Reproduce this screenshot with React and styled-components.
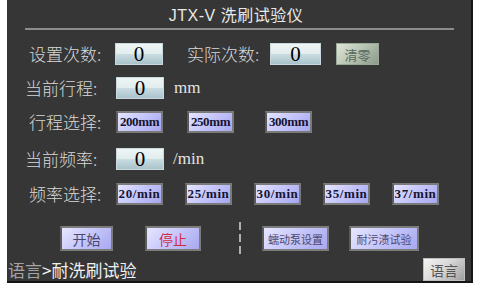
import styled, { createGlobalStyle } from "styled-components";

const Global = createGlobalStyle`
    body {
        margin: 0;
        background: #ffffff;
        font-family: "Noto Sans CJK SC", "Liberation Sans", sans-serif;
    }
`;

const Screen = styled.div`
    margin-left: 7px;
    width: 464px;
    height: 281px;
    background-color: #363636;
    border-right: 2px solid #151515;
    border-bottom: 2px solid #151515;
    display: flex;
    flex-direction: column;
    overflow: hidden;
`;

const Title = styled.div`
    height: 28px;
    display: flex;
    align-items: center;
    justify-content: center;
    padding-right: 6px;
    color: #e8e8e8;
    font-size: 16px;
    font-family: "Liberation Sans", "Noto Sans CJK SC", sans-serif;
    letter-spacing: 0.5px;
`;

const Rule = styled.div`
    height: 2px;
    margin: 0 17px 0 18px;
    background-color: #8c8c8c;
`;

const Row = styled.div`
    display: flex;
    align-items: center;
    height: ${p => p.$h || 22}px;
    margin-top: ${p => p.$mt}px;
    padding-left: ${p => p.$pl || 0}px;
    gap: ${p => p.$gap || 0}px;
`;

const Label = styled.div`
    width: ${p => p.$w}px;
    flex-shrink: 0;
    margin-left: ${p => p.$ml || 0}px;
    color: #d8d8d8;
    font-size: 17px;
    line-height: 22px;
    font-weight: 300;
    white-space: nowrap;
`;

const ValueBox = styled.div`
    width: ${p => p.$w || 48}px;
    height: 22px;
    flex-shrink: 0;
    box-sizing: border-box;
    border: 1px solid #c8d8dc;
    background: linear-gradient(180deg, #eef5f5 0%, #e2eded 48%, #c9dce1 52%, #a9c3cb 100%);
    display: flex;
    align-items: center;
    justify-content: center;
    color: #000;
    font-family: "Liberation Serif", serif;
    font-size: 21px;
    line-height: 1;
`;

const Unit = styled.div`
    margin-left: ${p => p.$ml}px;
    color: #e4e4e4;
    font-family: "Liberation Serif", serif;
    font-size: 17px;
`;

const ClearButton = styled.div`
    margin-left: 15px;
    width: 43px;
    height: 22px;
    box-sizing: border-box;
    border: 1px solid #9aa898;
    background: linear-gradient(135deg, #dfe6d8 0%, #b6c2b2 50%, #8e9c8c 100%);
    display: flex;
    align-items: center;
    justify-content: center;
    color: #56685a;
    font-size: 13px;
`;

const Choice = styled.div`
    width: 47px;
    height: 22px;
    flex-shrink: 0;
    margin-left: ${p => p.$ml || 0}px;
    box-sizing: border-box;
    border: 2px solid #7a7a7a;
    border-left-color: #5a5a5a;
    background: linear-gradient(135deg, #e4e4ff 0%, #c4c4fb 50%, #a6a6ef 100%);
    display: flex;
    align-items: center;
    justify-content: center;
    color: #141430;
    font-family: "Liberation Serif", serif;
    font-size: 13px;
    font-weight: bold;
    letter-spacing: ${p => p.$ls || 0}px;
    white-space: nowrap;
`;

const Action = styled.div`
    width: ${p => p.$w}px;
    height: 25px;
    flex-shrink: 0;
    margin-left: ${p => p.$ml}px;
    box-sizing: border-box;
    border: 2px solid #7c7c7c;
    border-left-color: #5c5c5c;
    background: linear-gradient(135deg, #e6e6ff 0%, #c6c6fb 50%, #a8a8ef 100%);
    display: flex;
    align-items: center;
    justify-content: center;
    color: ${p => p.$red ? "#d02c44" : "#4a4a70"};
    font-size: ${p => p.$fs || 14}px;
    white-space: nowrap;
`;

const Divider = styled.div`
    margin-left: ${p => p.$ml}px;
    width: 2px;
    height: 34px;
    align-self: center;
    background: repeating-linear-gradient(180deg, #b0b0b0 0 8px, transparent 8px 12px);
`;

const Footer = styled.div`
    display: flex;
    align-items: center;
    justify-content: space-between;
    height: 23px;
    margin-top: 7px;
    padding-right: 6px;
`;

const Crumb = styled.div`
    margin-left: 1px;
    font-size: 17px;
    color: #f0f0f0;
    white-space: nowrap;
    span {
        color: #a4a4a4;
    }
`;

const LangButton = styled.div`
    width: 42px;
    height: 23px;
    box-sizing: border-box;
    border: 1px solid #bdbdbd;
    background: linear-gradient(135deg, #f4f4f4 0%, #d6d6d6 50%, #9e9e9e 100%);
    display: flex;
    align-items: center;
    justify-content: center;
    color: #555;
    font-size: 14px;
`;

const strokes = ["200mm", "250mm", "300mm"];
const strokeGaps = [0, 24, 31];
const rates = ["20/min", "25/min", "30/min", "35/min", "37/min"];

export default function App() {
    return (
        <>
            <Global />
            <Screen>
                <Title>JTX-V 洗刷试验仪</Title>
                <Rule />

                <Row $mt={13} $pl={22}>
                    <Label $w={86}>设置次数:</Label>
                    <ValueBox>0</ValueBox>
                    <Label $w={83} $ml={24}>实际次数:</Label>
                    <ValueBox $w={51}>0</ValueBox>
                    <ClearButton>清零</ClearButton>
                </Row>

                <Row $mt={12} $pl={18}>
                    <Label $w={91}>当前行程:</Label>
                    <ValueBox>0</ValueBox>
                    <Unit $ml={10}>mm</Unit>
                </Row>

                <Row $mt={12} $pl={22}>
                    <Label $w={87}>行程选择:</Label>
                    {strokes.map((s, i) => (
                        <Choice key={s} $ml={strokeGaps[i]} $ls={-0.4}>{s}</Choice>
                    ))}
                </Row>

                <Row $mt={15} $pl={18}>
                    <Label $w={91}>当前频率:</Label>
                    <ValueBox>0</ValueBox>
                    <Unit $ml={9}>/min</Unit>
                </Row>

                <Row $mt={13} $pl={22} $gap={22}>
                    <Label $w={65}>频率选择:</Label>
                    {rates.map(r => (
                        <Choice key={r} $ls={0.6}>{r}</Choice>
                    ))}
                </Row>

                <Row $mt={21} $h={25}>
                    <Action $w={53} $ml={53}>开始</Action>
                    <Action $w={56} $ml={32} $red>停止</Action>
                    <Divider $ml={38} />
                    <Action $w={67} $ml={21} $fs={11}>蠕动泵设置</Action>
                    <Action $w={70} $ml={20} $fs={11}>耐污渍试验</Action>
                </Row>

                <Footer>
                    <Crumb><span>语言</span>&gt;耐洗刷试验</Crumb>
                    <LangButton>语言</LangButton>
                </Footer>
            </Screen>
        </>
    );
}
